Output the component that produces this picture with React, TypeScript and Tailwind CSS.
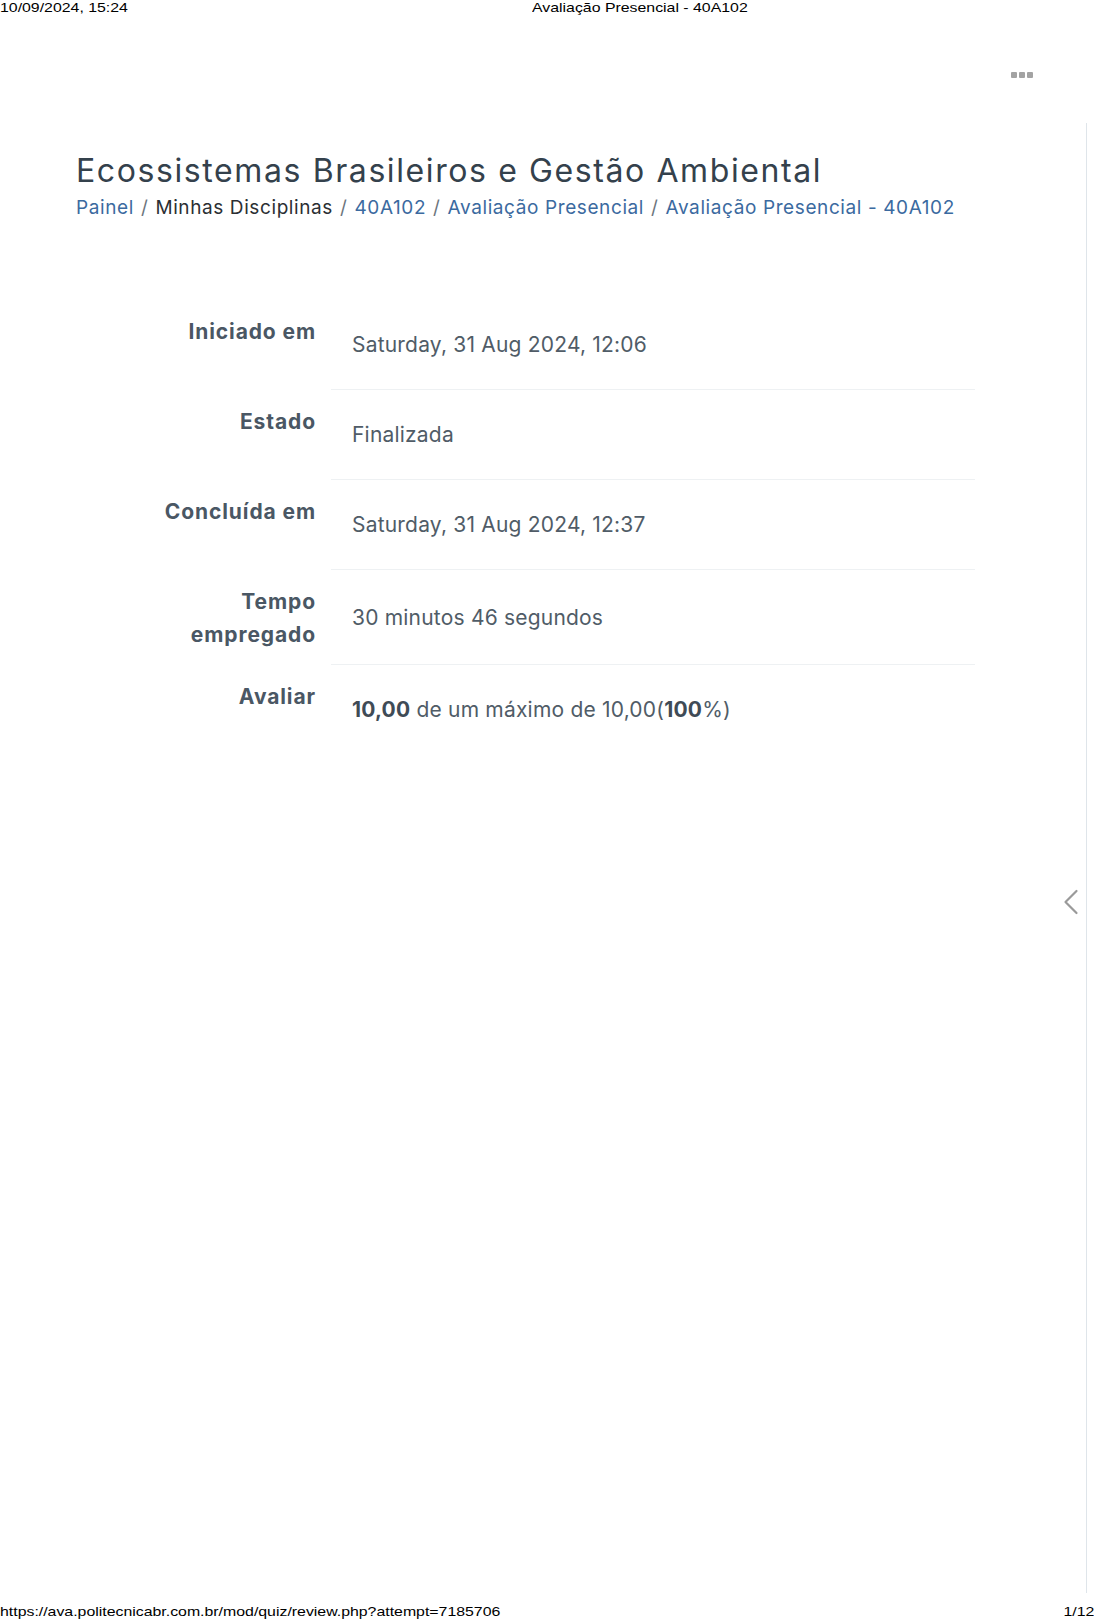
import { ChevronLeft } from 'lucide-react';

const rows = [
  { label: ['Iniciado em'], value: 'Saturday, 31 Aug 2024, 12:06' },
  { label: ['Estado'], value: 'Finalizada' },
  { label: ['Concluída em'], value: 'Saturday, 31 Aug 2024, 12:37' },
  { label: ['Tempo', 'empregado'], value: '30 minutos 46 segundos' },
];

const crumbs = [
  { text: 'Painel', link: true },
  { text: 'Minhas Disciplinas', link: false },
  { text: '40A102', link: true },
  { text: 'Avaliação Presencial', link: true },
  { text: 'Avaliação Presencial - 40A102', link: true },
];

export default function App() {
  return (
    <div className="w-[1094px] h-[1623px] bg-white flex flex-col overflow-hidden">
      {/* print header */}
      <div className="flex h-[18px] font-['Liberation_Sans',Arial,sans-serif] text-[13px] leading-[15px] text-black">
        <div className="w-[532px]">
          <span className="inline-block origin-left scale-x-[1.22]">10/09/2024, 15:24</span>
        </div>
        <span className="inline-block origin-left scale-x-[1.22]">Avaliação Presencial - 40A102</span>
      </div>

      {/* top nav dots */}
      <div className="flex justify-end pr-[61px] pt-[54px] h-[105px]">
        <div className="flex gap-[2px] h-[6px]">
          <span className="w-[6px] h-[6px] bg-[#a3a3a3] rounded-[1px]" />
          <span className="w-[6px] h-[6px] bg-[#a3a3a3] rounded-[1px]" />
          <span className="w-[6px] h-[6px] bg-[#a3a3a3] rounded-[1px]" />
        </div>
      </div>

      {/* page region */}
      <div className="relative w-[1087px] h-[1470px] border-r border-[#dfe5ea] font-['Inter',sans-serif]">
        <div className="pl-[76px] pt-[28px]">
          <h1 className="text-[32px] leading-[40px] font-normal text-[#34414c] tracking-[1.6px]">
            Ecossistemas Brasileiros e Gestão Ambiental
          </h1>
          <nav className="mt-[1px] flex items-center text-[19px] leading-[32px] tracking-[0.6px]">
            {crumbs.map((c, i) => (
              <span key={c.text} className="flex items-center">
                {i > 0 && <span className="mx-[7px] text-[#6c757d]">/</span>}
                <span className={c.link ? 'text-[#3b6aa0]' : 'text-[#2b2f33]'}>{c.text}</span>
              </span>
            ))}
          </nav>
        </div>

        <div className="mt-[76px] ml-[150px] grid grid-cols-[181px_644px] text-[21px] leading-[33px]">
          {rows.map((r) => (
            <div key={r.value} className="contents">
              <div className="pt-[15px] pb-[14px] pr-[15px] text-right font-bold text-[#4a5764] tracking-[0.9px]">
                {r.label.map((l) => (
                  <div key={l}>{l}</div>
                ))}
              </div>
              <div className="flex items-center pl-[21px] py-[28px] border-b border-[#eef1f3] text-[#505c67] tracking-[0.2px]">
                {r.value}
              </div>
            </div>
          ))}
          <div className="pt-[15px] pr-[15px] text-right font-bold text-[#4a5764] tracking-[0.9px]">
            Avaliar
          </div>
          <div className="flex items-center pl-[21px] py-[28px] text-[#505c67] tracking-[0.2px]">
            <span>
              <b className="font-bold text-[#3f4b56]">10,00</b> de um máximo de 10,00(
              <b className="font-bold text-[#3f4b56]">100</b>%)
            </span>
          </div>
        </div>

        <button className="absolute left-[1049px] top-[757px] text-[#9a9a9a]">
          <ChevronLeft size={44} strokeWidth={1.2} />
        </button>
      </div>

      {/* print footer */}
      <div className="mt-auto flex justify-between h-[19px] font-['Liberation_Sans',Arial,sans-serif] text-[13px] leading-[15px] text-black">
        <span className="inline-block origin-left scale-x-[1.22]">
          https://ava.politecnicabr.com.br/mod/quiz/review.php?attempt=7185706
        </span>
        <span className="inline-block origin-right scale-x-[1.22]">1/12</span>
      </div>
    </div>
  );
}
